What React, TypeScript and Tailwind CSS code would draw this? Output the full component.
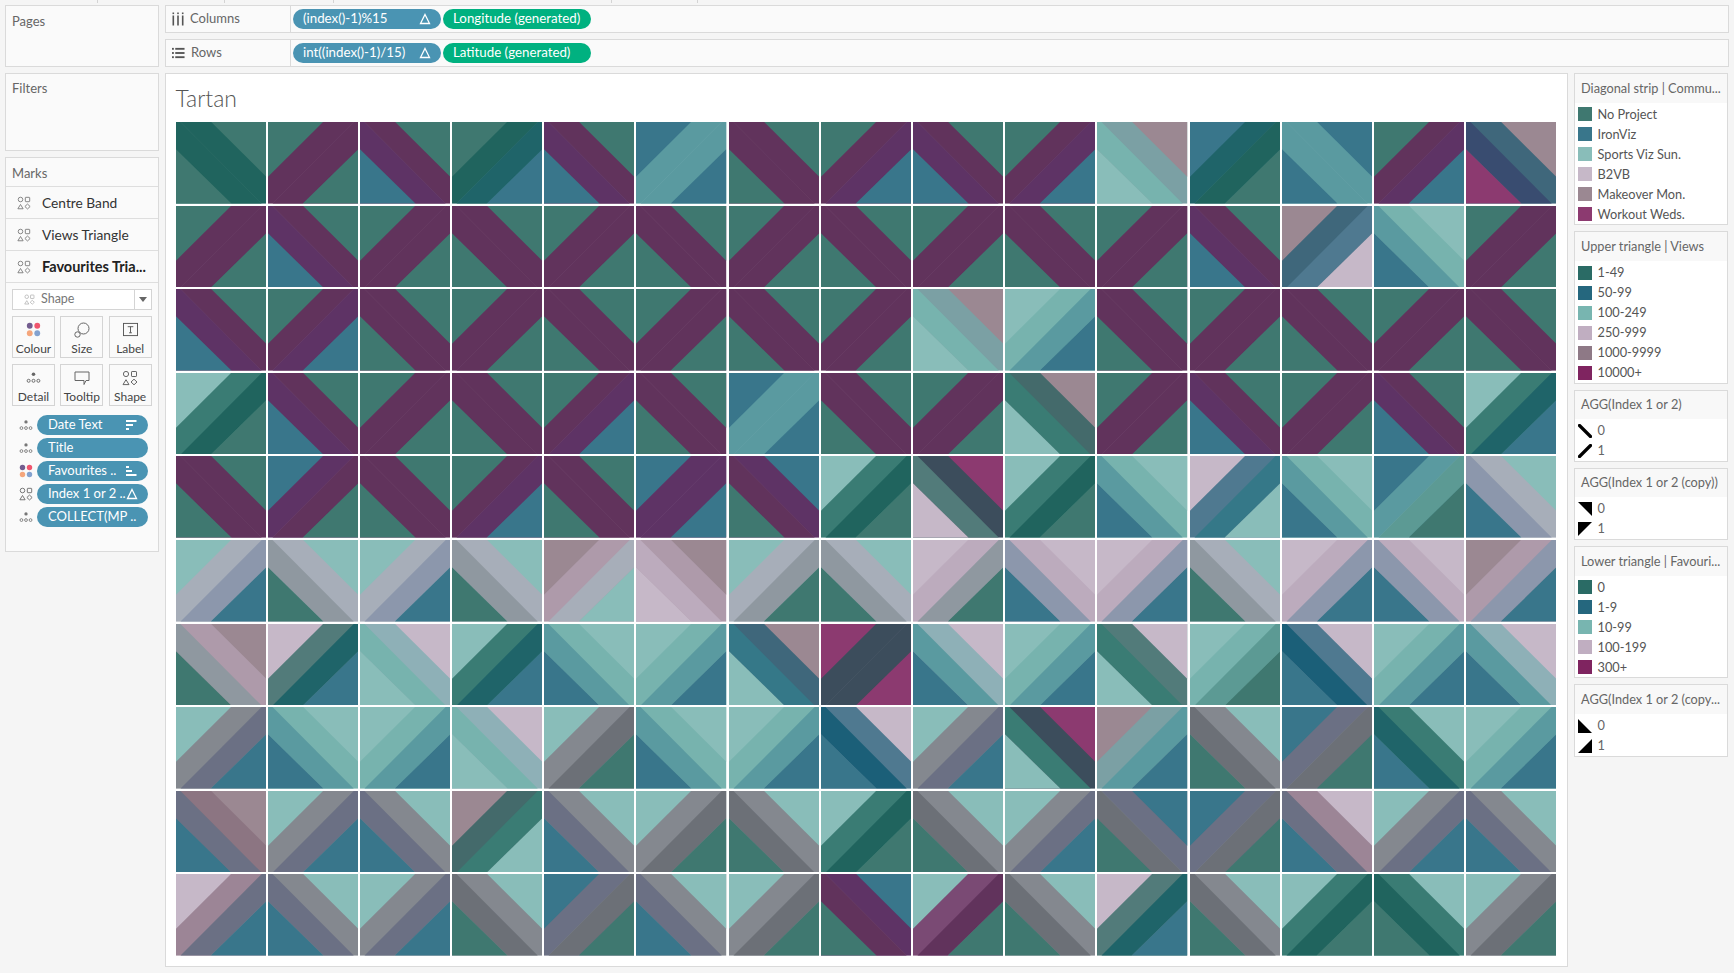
import React from "react";

const TRI: Record<string, string> = {
  G: "#3f7870", T: "#39768b", S: "#89bdb9", P: "#c6b8c8", M: "#9b8892", W: "#8c3a70",
};
const MIX: Record<string, Record<string, string>> = {
  G: { d: "#20645e", b: "#1f6469", l: "#5c9a94", p: "#8f98a0", m: "#6c7077", r: "#61335c" },
  T: { d: "#1f6469", b: "#1b5f78", l: "#5a9aa0", p: "#8c97ac", m: "#6b7084", r: "#5e3365" },
  S: { d: "#3a7c74", b: "#357888", l: "#77b3ae", p: "#a7aeb9", m: "#84888f", r: "#7a4a74" },
  P: { d: "#527b7a", b: "#4f7990", l: "#8eb0b7", p: "#bcabbd", m: "#9c8596", r: "#7a4a74" },
  M: { d: "#446a6b", b: "#3f677b", l: "#7ba0a4", p: "#ae9aaa", m: "#8c7582", r: "#7a4a74" },
  W: { d: "#3c4d5c", b: "#394c70", l: "#7ba0a4", p: "#ae9aaa", m: "#8c7582", r: "#7a4a74" },
};

// < means a band falling to the right, > a band rising to the right.
// Each cell: direction, upper triangle, strip, lower triangle.
const ROWS = [
  "<GdG >GrG <GrT >GdT <GrT >TlT <GrG >GrT <GrT >GrT <MlS >TdG <TlT >GrT <MbW",
  ">GrG <GrT >GrG <GrG >GrG <GrG >GrG <GrG >GrG <GrG >GrG <GrT >MbP <SlT >GrG",
  "<GrT >GrT <GrG >GrG <GrG >GrG <GrG >GrG <MlS >SlT <GrG >GrG <GrG >GrG <GrG",
  ">SdG <GrT >GrG <GrG >GrT <GrG >TlT <GrG >GrG <MdS >GrG <GrT >GrG <GrT >SdT",
  "<GrG >TrG <GrG >GrT <GrG >TrT <TrG >SdG <WdP >SdG <SlT >PbS <SlT >TlG <SpT",
  ">SpT <SpG >SpT <SpG >MpS <MpP >SpG <SpG >PpG <PpT >PpT <SpG >PpT <PpT >MpT",
  "<MpG >PdT <PlS >SdT <SlT >SlT <MbS >WdW <PlT >SlT <PdS >SlG <PbT >SlT <PlT",
  ">SmT <SlT >SlT <PlS >SmG <SlT >SlT <PbT >SmT <WdS >MlT <SmG >TmG <SdT >SlT",
  "<MmT >SmT <SmT >MdS <SmT >SmG <SmG >SdG <SmG >SmT <TmG >TmG <PmT >SmT <SmT",
  ">PmT <SmT >SmT <SmG >TmG <SmT >SmG <TrG >SrG <SmG >PdT <SmG >SdG <SdG >SmG",
];

function Cell({ code }: { code: string }) {
  const [dir, u, s, l] = code.split("");
  const up = MIX[u][s];
  const low = MIX[l][s];
  const line = "GTW".includes(u) && "GTW".includes(l);
  const falling = dir === "<";
  return (
    <svg viewBox="0 0 100 100" preserveAspectRatio="none" className="block h-full w-full">
      <rect width="100" height="100" fill={up} />
      {falling ? (
        <>
          <polygon points="0,0 5,0 95,100 61.5,100 0,33.5" fill={low} />
          <polygon points="39,0 100,0 100,67 " fill={TRI[u]} />
          <polygon points="0,33.5 61.5,100 0,100" fill={TRI[l]} />
          {line && <line x1="5" y1="0" x2="95" y2="100" stroke="#fff" strokeOpacity="0.1" strokeWidth="0.5" />}
        </>
      ) : (
        <>
          <polygon points="95,0 100,0 100,33.5 38.5,100 5,100" fill={low} />
          <polygon points="0,0 61,0 0,67" fill={TRI[u]} />
          <polygon points="100,33.5 100,100 38.5,100" fill={TRI[l]} />
          {line && <line x1="95" y1="0" x2="5" y2="100" stroke="#fff" strokeOpacity="0.1" strokeWidth="0.5" />}
        </>
      )}
    </svg>
  );
}

function Shapes({ className = "" }: { className?: string }) {
  return (
    <svg viewBox="0 0 16 16" className={className} fill="none" stroke="currentColor" strokeWidth="1">
      <circle cx="4" cy="4" r="2.6" />
      <rect x="9.5" y="1.5" width="5" height="5" rx="0.6" />
      <path d="M4 9.7 L7 14.6 H1 Z" strokeLinejoin="round" />
      <path d="M12 9.2 L15 12 L12 14.8 L9 12 Z" strokeLinejoin="round" />
    </svg>
  );
}

function DetailDots({ className = "" }: { className?: string }) {
  return (
    <svg viewBox="0 0 16 16" className={className} fill="none" stroke="currentColor" strokeWidth="1">
      <circle cx="8" cy="4.5" r="1.9" fill="currentColor" stroke="none" />
      <circle cx="2.8" cy="11.5" r="1.6" />
      <circle cx="8" cy="11.5" r="1.6" />
      <circle cx="13.2" cy="11.5" r="1.6" />
    </svg>
  );
}

function ColourDots({ className = "" }: { className?: string }) {
  return (
    <svg viewBox="0 0 16 16" className={className}>
      <circle cx="4" cy="4" r="3.1" fill="#735d8f" />
      <circle cx="12" cy="4" r="3.1" fill="#f0566e" />
      <circle cx="4" cy="12" r="3.1" fill="#f5a67c" />
      <circle cx="12" cy="12" r="3.1" fill="#84a2cf" />
    </svg>
  );
}

function Delta() {
  return (
    <svg viewBox="0 0 12 12" className="h-[12px] w-[12px] shrink-0" fill="none" stroke="#fff" strokeWidth="1.3">
      <path d="M6 1.5 L10.5 10.5 H1.5 Z" strokeLinejoin="miter" />
    </svg>
  );
}

function SortDown() {
  return (
    <svg viewBox="0 0 12 12" className="h-[12px] w-[12px] shrink-0" fill="#fff">
      <rect x="1" y="1" width="10.5" height="2" />
      <rect x="1" y="5" width="7" height="2" />
      <rect x="1" y="9" width="3" height="2" />
    </svg>
  );
}

function SortUp() {
  return (
    <svg viewBox="0 0 12 12" className="h-[12px] w-[12px] shrink-0" fill="#fff">
      <rect x="1" y="1" width="3" height="2" />
      <rect x="1" y="5" width="6" height="2" />
      <rect x="1" y="9" width="10.5" height="2" />
    </svg>
  );
}

function Pill({ text, green, trail }: { text: string; green?: boolean; trail?: React.ReactNode }) {
  return (
    <div
      className={`flex h-[20px] w-[148px] items-center justify-between rounded-full pl-[10px] pr-[10px] text-[13.3px] leading-none text-white ${
        green ? "bg-[#00b180]" : "bg-[#4a94b3]"
      }`}
    >
      <span className="whitespace-nowrap">{text}</span>
      {trail}
    </div>
  );
}

function Shelf({ label, icon, pills }: { label: string; icon: React.ReactNode; pills: React.ReactNode }) {
  return (
    <div className="flex h-[28px] items-stretch border-[1.5px] border-[#dadada] bg-[#fafafa]">
      <div className="flex w-[125px] shrink-0 items-center gap-[6px] border-r border-[#dadada] pl-[6px] text-[13px] text-[#666]">
        {icon}
        <span>{label}</span>
      </div>
      <div className="flex items-center gap-[2px] pl-[2px]">{pills}</div>
    </div>
  );
}

function MarkRow({ label, bold }: { label: string; bold?: boolean }) {
  return (
    <div className="flex h-[32px] items-center gap-[11px] border-b border-[#dedede] pl-[11px]">
      <Shapes className="h-[14px] w-[14px] shrink-0 text-[#777]" />
      <span className={`whitespace-nowrap ${bold ? "text-[14.5px] font-bold text-[#222]" : "pt-[2px] text-[13.75px] text-[#333]"}`}>{label}</span>
    </div>
  );
}

function Tile({ label, icon }: { label: string; icon: React.ReactNode }) {
  return (
    <div className="flex h-[42px] w-[43px] flex-col items-center justify-between border border-[#d4d4d4] pb-[2px] pt-[5px] text-[12px] leading-none text-[#444]">
      <div className="flex h-[16px] items-center justify-center">{icon}</div>
      <span>{label}</span>
    </div>
  );
}

function MarkField({ icon, text, trail }: { icon: React.ReactNode; text: string; trail?: React.ReactNode }) {
  return (
    <div className="flex items-center gap-[4px]">
      <div className="flex w-[14px] justify-center">{icon}</div>
      <div className="flex h-[20px] w-[111px] items-center justify-between rounded-full bg-[#4a94b3] pl-[11px] pr-[11px] text-[13px] leading-none text-white">
        <span className="whitespace-nowrap">{text}</span>
        {trail}
      </div>
    </div>
  );
}

function Legend({ title, children }: { title: string; children: React.ReactNode }) {
  return (
    <div className="border-[1.5px] border-[#dadada] bg-white">
      <div className="flex h-[28.5px] items-center whitespace-nowrap bg-[#f8f8f8] pl-[6px] text-[12.75px] text-[#666]">{title}</div>
      <div className="flex flex-col pt-[1.75px]">{children}</div>
    </div>
  );
}

function Swatch({ colour, label }: { colour: string; label: string }) {
  return (
    <div className="flex h-[20px] items-center gap-[5.5px] pl-[3px] text-[12.75px] text-[#555]">
      <span className="h-[14px] w-[14px] shrink-0" style={{ background: colour }} />
      <span className="whitespace-nowrap">{label}</span>
    </div>
  );
}

function Glyph({ label, children }: { label: string; children: React.ReactNode }) {
  return (
    <div className="flex h-[20px] items-center gap-[5.5px] pl-[3px] text-[12.75px] text-[#666]">
      <svg viewBox="0 0 14 14" className="h-[14px] w-[14px] shrink-0">{children}</svg>
      <span>{label}</span>
    </div>
  );
}

const Band = ({ rising }: { rising?: boolean }) => (
  <line x1="1.5" y1={rising ? 12.5 : 1.5} x2="12.5" y2={rising ? 1.5 : 12.5} stroke="#000" strokeWidth="3.2" strokeLinecap="round" />
);

export default function App() {
  return (
    <div
      className="flex h-[973px] w-[1734px] flex-col overflow-hidden bg-[#f5f5f5] text-[#555]"
      style={{ fontFamily: "Lato, 'Open Sans', 'Liberation Sans', sans-serif" }}
    >
      <div className="flex h-[5px] shrink-0">
        <div className="h-[3px] w-[98px] border-r border-[#d4d4d4]" />
        <div className="h-[3px] w-[127px] border-r border-[#d4d4d4]" />
        <div className="h-[3px] w-[109px] border-r border-[#d4d4d4]" />
        <div className="h-[3px] w-[278px] border-r border-[#d4d4d4]" />
        <div className="h-[3px] w-[86px] border-r border-[#d4d4d4]" />
      </div>
      <div className="flex min-h-0 flex-1 gap-[6px] pl-[5px]">
        {/* Left cards */}
        <div className="flex w-[154px] shrink-0 flex-col gap-[6px]">
          <div className="h-[62px] border-[1.5px] border-[#dadada] bg-[#fafafa] pl-[6px] pt-[6px] text-[13px] text-[#666]">Pages</div>
          <div className="h-[78px] border-[1.5px] border-[#dadada] bg-[#fafafa] pl-[6px] pt-[5px] text-[13px] text-[#666]">Filters</div>
          <div className="h-[395px] border-[1.5px] border-[#dadada] bg-[#fafafa]">
            <div className="flex h-[29px] items-center border-b border-[#dedede] pl-[6px] pt-[4px] text-[13px] text-[#666]">Marks</div>
            <MarkRow label="Centre Band" />
            <MarkRow label="Views Triangle" />
            <MarkRow bold label="Favourites Tria..." />
            <div className="flex flex-col gap-[6px] px-[6px] pt-[5.5px]">
              <div className="flex h-[21px] items-center border-[1.5px] border-[#d4d4d4] bg-white pl-[11px] text-[12.5px] text-[#777]">
                <Shapes className="h-[11px] w-[11px] text-[#aaa]" />
                <span className="ml-[6px] flex-1 pt-[1px]">Shape</span>
                <div className="flex h-full w-[17px] items-center justify-center border-l border-[#d4d4d4]">
                  <span className="h-0 w-0 border-x-[4px] border-t-[5px] border-x-transparent border-t-[#666]" />
                </div>
              </div>
              <div className="grid grid-cols-3 gap-x-[5px] gap-y-[6px]">
                <Tile label="Colour" icon={<ColourDots className="h-[15px] w-[15px]" />} />
                <Tile
                  label="Size"
                  icon={
                    <svg viewBox="0 0 16 16" className="h-[16px] w-[16px]" fill="none" stroke="#666" strokeWidth="1">
                      <circle cx="9.5" cy="6.5" r="5.5" />
                      <circle cx="3.5" cy="12.5" r="2.7" fill="#fafafa" />
                    </svg>
                  }
                />
                <Tile
                  label="Label"
                  icon={
                    <svg viewBox="0 0 16 16" className="h-[15px] w-[15px]" fill="none" stroke="#555" strokeWidth="1">
                      <rect x="0.5" y="1.5" width="15" height="13" />
                      <path d="M5 5 H11 M8 5 V11.5 M6.5 11.5 H9.5" />
                    </svg>
                  }
                />
                <Tile label="Detail" icon={<DetailDots className="h-[15px] w-[15px] text-[#666]" />} />
                <Tile
                  label="Tooltip"
                  icon={
                    <svg viewBox="0 0 16 16" className="h-[16px] w-[16px]" fill="none" stroke="#666" strokeWidth="1">
                      <path d="M1 2 H15 V10.5 H12 L10 14.5 V10.5 H1 Z" strokeLinejoin="round" />
                    </svg>
                  }
                />
                <Tile label="Shape" icon={<Shapes className="h-[16px] w-[16px] text-[#666]" />} />
              </div>
              <div className="mt-[3px] flex flex-col gap-[3px] pl-[7px]">
                <MarkField icon={<DetailDots className="h-[14px] w-[14px] text-[#777]" />} text="Date Text" trail={<SortDown />} />
                <MarkField icon={<DetailDots className="h-[14px] w-[14px] text-[#777]" />} text="Title" />
                <MarkField icon={<ColourDots className="h-[14px] w-[14px]" />} text="Favourites .." trail={<SortUp />} />
                <MarkField icon={<Shapes className="h-[14px] w-[14px] text-[#666]" />} text="Index 1 or 2 .." trail={<Delta />} />
                <MarkField icon={<DetailDots className="h-[14px] w-[14px] text-[#777]" />} text="COLLECT(MP .." />
              </div>
            </div>
          </div>
        </div>

        {/* Right side */}
        <div className="flex w-[1564px] shrink-0 flex-col gap-[6px]">
          <Shelf
            label="Columns"
            icon={
              <svg viewBox="0 0 12 14" className="h-[14px] w-[12px] text-[#555]" fill="currentColor">
                <rect x="0.5" y="0.5" width="1.6" height="1.6" />
                <rect x="0.5" y="3.5" width="1.6" height="10" />
                <rect x="5.2" y="0.5" width="1.6" height="1.6" />
                <rect x="5.2" y="3.5" width="1.6" height="10" />
                <rect x="9.9" y="0.5" width="1.6" height="1.6" />
                <rect x="9.9" y="3.5" width="1.6" height="10" />
              </svg>
            }
            pills={
              <>
                <Pill text="(index()-1)%15" trail={<Delta />} />
                <Pill green text="Longitude (generated)" />
              </>
            }
          />
          <Shelf
            label="Rows"
            icon={
              <svg viewBox="0 0 14 12" className="h-[12px] w-[13px] text-[#555]" fill="currentColor">
                <rect x="0" y="0.5" width="2" height="2" />
                <rect x="3.5" y="0.5" width="10" height="2" />
                <rect x="0" y="5" width="2" height="2" />
                <rect x="3.5" y="5" width="10" height="2" />
                <rect x="0" y="9.5" width="2" height="2" />
                <rect x="3.5" y="9.5" width="10" height="2" />
              </svg>
            }
            pills={
              <>
                <Pill text="int((index()-1)/15)" trail={<Delta />} />
                <Pill green text="Latitude (generated)" />
              </>
            }
          />
          <div className="flex h-[894px] gap-[6px]">
            <div className="flex h-[894px] w-[1403px] shrink-0 flex-col border-[1.5px] border-[#dadada] bg-white pl-[9.5px]">
              <div className="flex h-[48px] shrink-0 items-center pt-[1px] text-[23px] font-light leading-none text-[#555]">Tartan</div>
              <div className="grid h-[834px] w-[1381px] grid-cols-[repeat(15,1fr)] grid-rows-[repeat(10,1fr)] gap-[2px]">
                {ROWS.flatMap((row, r) =>
                  row.split(" ").map((code, c) => <Cell key={`${r}-${c}`} code={code} />)
                )}
              </div>
            </div>
            <div className="flex w-[154px] shrink-0 flex-col gap-[6px]">
              <Legend title="Diagonal strip | Commu...">
                <Swatch colour="#3f7870" label="No Project" />
                <Swatch colour="#39768b" label="IronViz" />
                <Swatch colour="#89bdb9" label="Sports Viz Sun." />
                <Swatch colour="#c6b8c8" label="B2VB" />
                <Swatch colour="#9b8892" label="Makeover Mon." />
                <Swatch colour="#8c3a70" label="Workout Weds." />
              </Legend>
              <Legend title="Upper triangle | Views">
                <Swatch colour="#2a6b65" label="1-49" />
                <Swatch colour="#25677e" label="50-99" />
                <Swatch colour="#78b5b0" label="100-249" />
                <Swatch colour="#c0aec1" label="250-999" />
                <Swatch colour="#8e7986" label="1000-9999" />
                <Swatch colour="#7f2460" label="10000+" />
              </Legend>
              <Legend title="AGG(Index 1 or 2)">
                <Glyph label="0"><Band /></Glyph>
                <Glyph label="1"><Band rising /></Glyph>
              </Legend>
              <Legend title="AGG(Index 1 or 2 (copy))">
                <Glyph label="0"><polygon points="0,0 14,0 14,14" fill="#000" /></Glyph>
                <Glyph label="1"><polygon points="0,0 14,0 0,14" fill="#000" /></Glyph>
              </Legend>
              <Legend title="Lower triangle | Favouri...">
                <Swatch colour="#2a6b65" label="0" />
                <Swatch colour="#25677e" label="1-9" />
                <Swatch colour="#78b5b0" label="10-99" />
                <Swatch colour="#c0aec1" label="100-199" />
                <Swatch colour="#7f2460" label="300+" />
              </Legend>
              <Legend title="AGG(Index 1 or 2 (copy...">
                <Glyph label="0"><polygon points="0,0 14,14 0,14" fill="#000" /></Glyph>
                <Glyph label="1"><polygon points="14,0 14,14 0,14" fill="#000" /></Glyph>
              </Legend>
            </div>
          </div>
        </div>
      </div>
    </div>
  );
}
